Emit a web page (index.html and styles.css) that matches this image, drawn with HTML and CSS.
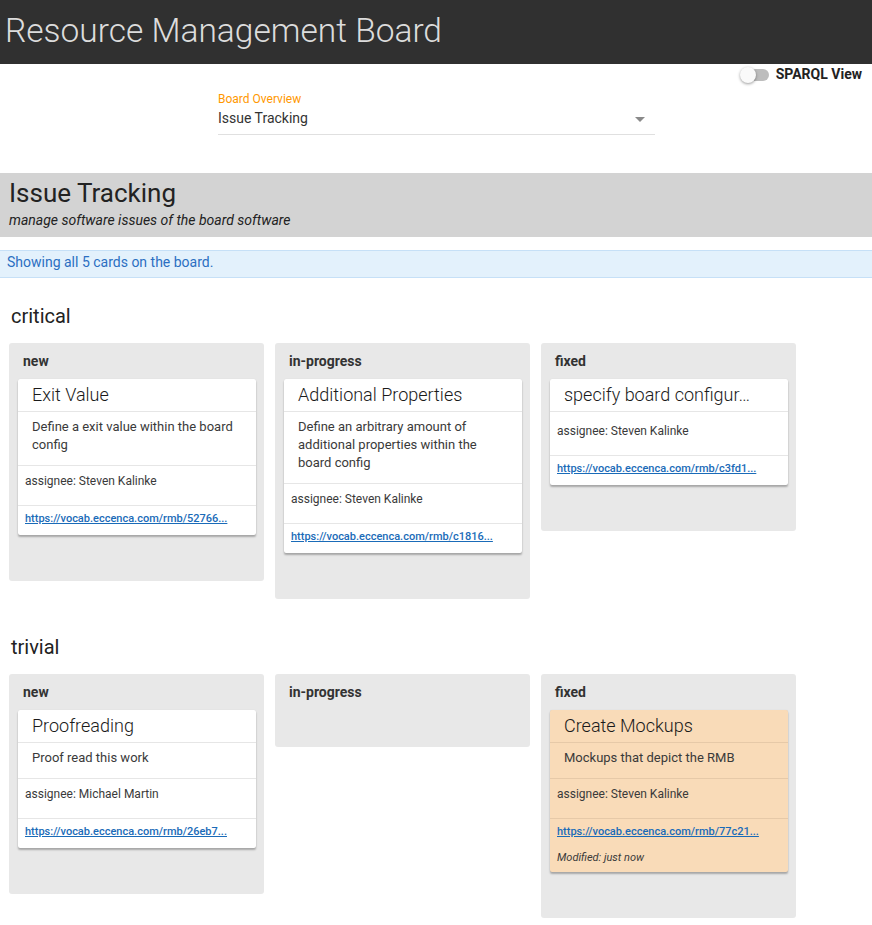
FILE: index.html
```html
<!DOCTYPE html>
<html lang="en">
<head>
<meta charset="utf-8">
<title>Resource Management Board</title>
<link rel="stylesheet" href="styles.css">
</head>
<body>
<header class="appbar">
  <h1 class="appbar-title">Resource Management Board</h1>
</header>

<div class="toolbar">
  <label class="toggle">
    <span class="toggle-switch"><span class="toggle-track"></span><span class="toggle-thumb"></span></span>
    <span class="toggle-label">SPARQL View</span>
  </label>
</div>

<div class="select-field">
  <div class="select-label">Board Overview</div>
  <div class="select-value">
    <span>Issue Tracking</span>
    <span class="select-arrow"></span>
  </div>
</div>

<section class="board-banner">
  <h2 class="board-title">Issue Tracking</h2>
  <p class="board-desc">manage software issues of the board software</p>
</section>

<div class="info-bar">Showing all 5 cards on the board.</div>

<main class="board">
  <section class="lane">
    <h3 class="lane-title">critical</h3>
    <div class="columns">
      <div class="column">
        <div class="column-title">new</div>
        <article class="card">
          <div class="card-title">Exit Value</div>
          <div class="card-desc">Define a exit value within the board config</div>
          <div class="card-prop">assignee: Steven Kalinke</div>
          <div class="card-link"><a href="#">https://vocab.eccenca.com/rmb/52766...</a></div>
        </article>
      </div>
      <div class="column">
        <div class="column-title">in-progress</div>
        <article class="card">
          <div class="card-title">Additional Properties</div>
          <div class="card-desc">Define an arbitrary amount of additional properties within the board config</div>
          <div class="card-prop">assignee: Steven Kalinke</div>
          <div class="card-link"><a href="#">https://vocab.eccenca.com/rmb/c1816...</a></div>
        </article>
      </div>
      <div class="column">
        <div class="column-title">fixed</div>
        <article class="card">
          <div class="card-title">specify board configur…</div>
          <div class="card-prop card-prop-first">assignee: Steven Kalinke</div>
          <div class="card-link"><a href="#">https://vocab.eccenca.com/rmb/c3fd1...</a></div>
        </article>
      </div>
    </div>
  </section>

  <section class="lane">
    <h3 class="lane-title">trivial</h3>
    <div class="columns">
      <div class="column">
        <div class="column-title">new</div>
        <article class="card">
          <div class="card-title">Proofreading</div>
          <div class="card-desc">Proof read this work</div>
          <div class="card-prop">assignee: Michael Martin</div>
          <div class="card-link"><a href="#">https://vocab.eccenca.com/rmb/26eb7...</a></div>
        </article>
      </div>
      <div class="column">
        <div class="column-title">in-progress</div>
      </div>
      <div class="column">
        <div class="column-title">fixed</div>
        <article class="card card-modified">
          <div class="card-title">Create Mockups</div>
          <div class="card-desc">Mockups that depict the RMB</div>
          <div class="card-prop">assignee: Steven Kalinke</div>
          <div class="card-link"><a href="#">https://vocab.eccenca.com/rmb/77c21...</a>
            <div class="card-modified-note">Modified: just now</div>
          </div>
        </article>
      </div>
    </div>
  </section>
</main>
</body>
</html>
```

FILE: styles.css
```css
* { box-sizing: border-box; }

html, body {
  margin: 0;
  padding: 0;
  background: #ffffff;
  font-family: Roboto, "Liberation Sans", Arial, sans-serif;
  color: #333333;
}

.appbar {
  height: 64px;
  background: #303030;
  padding-left: 5px;
}

.appbar-title {
  margin: 0;
  font-family: "Roboto Light", Roboto, "Liberation Sans", Arial, sans-serif;
  font-size: 33.5px;
  font-weight: 300;
  line-height: 62px;
  color: #dcdcdc;
  white-space: nowrap;
}

.toolbar {
  height: 20px;
  display: flex;
  justify-content: flex-end;
  padding-right: 10px;
}

.toggle {
  display: flex;
  align-items: center;
  gap: 7px;
  cursor: pointer;
}

.toggle-switch {
  position: relative;
  width: 29px;
  height: 20px;
  display: block;
}

.toggle-track {
  position: absolute;
  left: 3px;
  top: 5px;
  width: 26px;
  height: 12px;
  border-radius: 6px;
  background: #bdbdbd;
}

.toggle-thumb {
  position: absolute;
  left: 0;
  top: 3px;
  width: 16px;
  height: 16px;
  border-radius: 50%;
  background: #fafafa;
  box-shadow: 0 1px 3px rgba(0, 0, 0, 0.4);
}

.toggle-label {
  font-size: 14px;
  font-weight: 700;
  line-height: 20px;
  color: #222222;
}

.select-field {
  margin: 8px 0 0 218px;
  width: 437px;
  border-bottom: 1px solid #e0e0e0;
  padding-bottom: 6px;
}

.select-label {
  font-size: 12px;
  line-height: 14px;
  color: #ff9800;
}

.select-value {
  margin-top: 2px;
  display: flex;
  justify-content: space-between;
  align-items: center;
  font-size: 14px;
  line-height: 20px;
  color: #333333;
  padding-right: 10px;
}

.select-arrow {
  width: 0;
  height: 0;
  border-left: 5px solid transparent;
  border-right: 5px solid transparent;
  border-top: 5px solid #8a8a8a;
  margin-top: 2px;
}

.board-banner {
  margin-top: 38px;
  background: #d3d3d3;
  padding: 4px 9px 0;
  height: 64px;
}

.board-title {
  margin: 0;
  font-size: 26px;
  font-weight: 400;
  line-height: 33px;
  color: #222222;
}

.board-desc {
  margin: 0;
  font-size: 14px;
  font-style: italic;
  line-height: 20px;
  color: #222222;
}

.info-bar {
  margin-top: 13px;
  background: #e3f1fc;
  border-top: 1px solid #c6e0f7;
  border-bottom: 1px solid #c6e0f7;
  padding: 1px 7px 5px;
  font-size: 14px;
  line-height: 20px;
  color: #2b6fc2;
}

.board {
  padding: 26px 0 30px 9px;
}

.lane + .lane {
  margin-top: 36px;
}

.lane-title {
  margin: 0 0 15px 2px;
  font-size: 20px;
  font-weight: 400;
  line-height: 24px;
  color: #222222;
}

.columns {
  display: flex;
  align-items: flex-start;
  gap: 11px;
}

.column {
  width: 255px;
  background: #e8e8e8;
  border-radius: 3px;
  padding: 0 8px 37px 9px;
}

.column-title {
  padding: 10px 5px;
  font-size: 14px;
  font-weight: 700;
  line-height: 16px;
  color: #333333;
}

.card {
  background: #ffffff;
  border-radius: 2px;
  margin-bottom: 9px;
  box-shadow: 0 2px 2px rgba(0, 0, 0, 0.28), 0 0 1px rgba(0, 0, 0, 0.12);
}

.card-title,
.card-desc,
.card-prop {
  border-bottom: 1px solid #e6e6e6;
}

.card-title {
  padding: 0 14px;
  font-family: "Roboto Light", Roboto, "Liberation Sans", Arial, sans-serif;
  font-size: 18px;
  font-weight: 300;
  line-height: 32px;
  color: #1a1a1a;
  white-space: nowrap;
  overflow: hidden;
}

.card-desc {
  padding: 6px 14px 11px;
  font-size: 13px;
  line-height: 18px;
  color: #3a3a3a;
}

.card-prop {
  padding: 5px 7px 14px;
  font-size: 12px;
  line-height: 20px;
  color: #3a3a3a;
}

.card-prop-first {
  padding-top: 9px;
}

.card-link {
  padding: 5px 7px 8px;
  font-size: 11px;
  line-height: 16px;
}

.card-link a {
  color: #1a6bb8;
  font-weight: 500;
  text-decoration: underline;
}

.card-modified {
  background: #f9dbb8;
}

.card-modified .card-title,
.card-modified .card-desc,
.card-modified .card-prop {
  border-bottom-color: #e6c9a8;
}

.card-modified .card-link {
  padding-bottom: 6px;
}

.card-modified-note {
  margin-top: 10px;
  font-size: 11px;
  font-style: italic;
  line-height: 16px;
  color: #3a3a3a;
}
```
